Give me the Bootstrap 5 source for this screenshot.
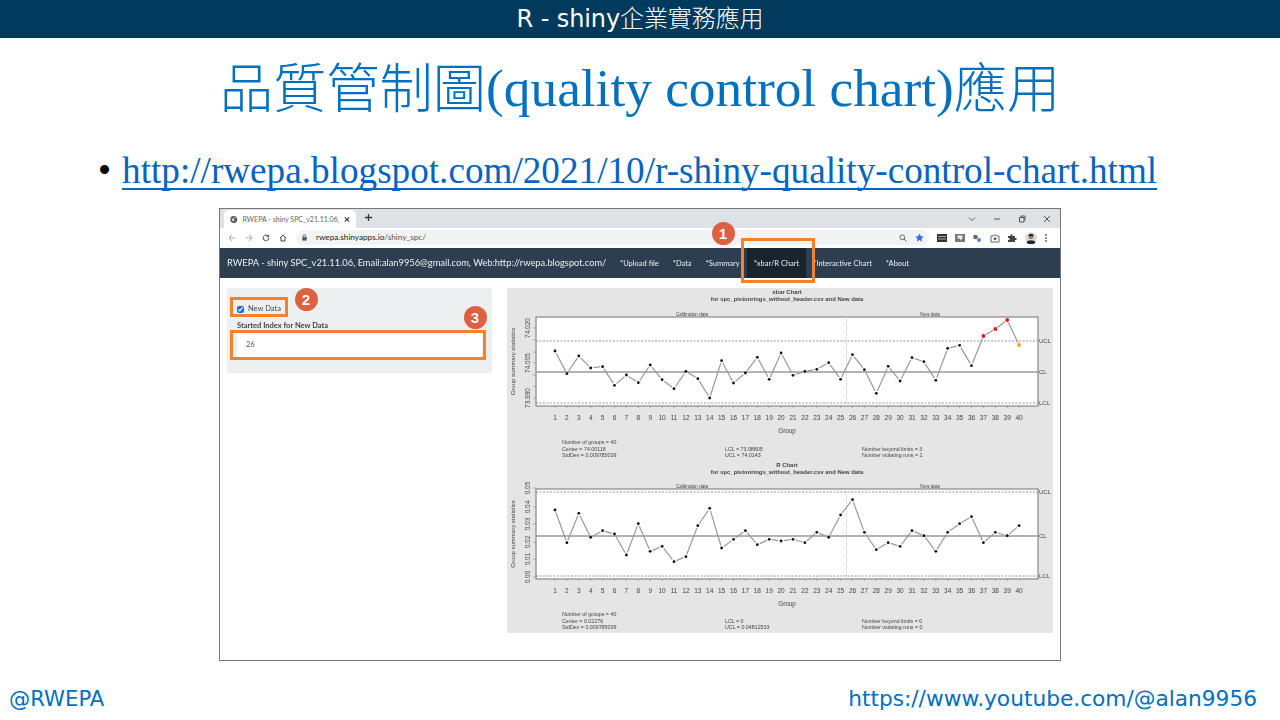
<!DOCTYPE html>
<html lang="zh-Hant">
<head>
  <meta charset="UTF-8">
  <title>R - shiny企業實務應用</title>
  <link rel="stylesheet" href="https://cdn.jsdelivr.net/npm/bootstrap@5.3.0/dist/css/bootstrap.min.css">
  <style>
    html, body { height: 100%; overflow: hidden; background: #fff; }
    .slide { width: 1280px; height: 720px; }
    .top-bar { height: 38px; background: #003a5c; color: #fff; font: 400 24px/38px "DejaVu Sans", "Noto Sans CJK TC", sans-serif; letter-spacing: -.1px; }
    .top-cjk { font-weight: 300; }
    .slide-title { height: 101px; margin: 0; color: #0070c0; font: 300 53.3px/101px "Liberation Serif", "Noto Sans CJK TC", serif; }
    .title-cjk { vertical-align: -2px; }
    .bullet-line { height: 69px; padding-left: 98px; font: 37.2px/64px "Liberation Serif", serif; gap: 11px; color: #000; }
    .bullet-line a { color: #0563c1; text-decoration-skip-ink: none; text-decoration-thickness: 1.5px; text-underline-offset: 5px; }
    .shot-wrap { padding-left: 219px; }
    .shot { width: 842px; height: 453px; border: 1px solid #777; position: relative; font-family: "Lato", sans-serif; }
    .tab-strip { height: 19px; background: #dee1e6; padding-left: 4px; color: #666; font-size: 7px; }
    .tab-item { width: 132px; height: 18px; background: #fff; border-radius: 5px 5px 0 0; gap: 5px; padding: 0 6px 0 6px; margin-top: 1px; white-space: nowrap; }
    .tab-item span { flex: 1; }
    .tool-strip { height: 20px; background: #fff; padding: 0 8px 1px; color: #555; }
    .nav-icons { gap: 9px; }
    .url-box { width: 633px; height: 15px; background: #f1f3f4; border-radius: 8px; font-size: 8.2px; padding: 0 5px; margin-left: 9px; }
    .url-box b { font-weight: 400; color: #222; }
    .ext-icons { gap: 7.5px; margin-left: 8px; }
    .shiny-nav { height: 30px; background: #2c3e50; color: #ecf0f1; padding-left: 7px; font-size: 7.5px; }
    .shiny-brand { font-size: 9.3px; width: 386px; white-space: nowrap; }
    .shiny-link { height: 30px; padding: 0 7px; white-space: nowrap; line-height: 31px; }
    .shiny-link.on { background: #1a242f; }
    .shot-body { padding: 10px 8px 0 7px; gap: 15px; }
    .side-well { width: 265px; height: 85px; background: #ecf0f1; border-radius: 2px; padding: 15px 10px 0; font-size: 7.5px; color: #333; }
    .side-check { gap: 4px; height: 12px; margin-bottom: 6px; color: #444; }
    .side-check input { width: 7px; height: 7px; margin: 0; accent-color: #0b6ee0; }
    .side-label { font-weight: 700; color: #444; line-height: 10px; margin-bottom: 2px; }
    .side-input { height: 24px; background: #fff; padding-left: 9px; line-height: 24px; color: #555; width: 245px; }
    .chart-panel { width: 546px; height: 345px; background: #e5e5e5; }
    .chart-panel svg { display: block; }
    .chart-panel text { font-family: "Liberation Sans", sans-serif; }
    .mark-box { position: absolute; border: 3px solid #f5822a; }
    .mark-num { position: absolute; width: 23px; height: 23px; border-radius: 50%; background: #dc6141; color: #fff; font: 700 15px/23px "Liberation Sans", sans-serif; text-align: center; }
    .foot-line { position: absolute; left: 0; right: 0; top: 685px; padding: 0 23px 0 9px; color: #0070c0; font: 21.7px/28px "DejaVu Sans", sans-serif; }
    .foot-handle { font-size: 21.2px; }
    .soft { filter: blur(.45px); }
  </style>
</head>
<body>
  <div class="slide position-relative">
    <div class="top-bar text-center">R - shiny<span class="top-cjk">企業實務應用</span></div>
    <h1 class="slide-title text-center"><span class="title-cjk">品質管制圖</span>(quality control chart)<span class="title-cjk">應用</span></h1>
    <div class="bullet-line d-flex">
      <span>•</span>
      <a href="#">http://rwepa.blogspot.com/2021/10/r-shiny-quality-control-chart.html</a>
    </div>

    <div class="shot-wrap">
      <div class="shot">
        <div class="soft">
          <div class="tab-strip d-flex">
            <div class="tab-item d-flex align-items-center">
              <svg width="9" height="9" viewBox="0 0 10 10"><circle cx="5" cy="5" r="4.5" fill="#555"/><path d="M2 3l3 1 1 2-2 2-1-2zM6 1l2 2-2 1z" fill="#dee1e6"/></svg>
              <span>RWEPA - shiny SPC_v21.11.06,</span>
              <svg width="7" height="7" viewBox="0 0 8 8"><path d="M1 1l6 6M7 1l-6 6" stroke="#333" stroke-width="1.4"/></svg>
            </div>
            <svg class="ms-2 mt-1" width="9" height="9" viewBox="0 0 10 10"><path d="M5 1v8M1 5h8" stroke="#333" stroke-width="1.4"/></svg>
            <div class="d-flex align-items-center ms-auto" style="gap:17px;padding-right:9px">
              <svg width="8" height="8" viewBox="0 0 8 8"><path d="M1 2.500l3 3 3-3" fill="none" stroke="#666"/></svg>
              <svg width="8" height="8" viewBox="0 0 8 8"><path d="M1 4h6" stroke="#555"/></svg>
              <svg width="8" height="8" viewBox="0 0 8 8"><path d="M1.500 2.500h4.500v4.500h-4.500zM3 2.500v-1.500h4v4h-1" fill="none" stroke="#555"/></svg>
              <svg width="8" height="8" viewBox="0 0 8 8"><path d="M1 1l6 6M7 1l-6 6" stroke="#555"/></svg>
            </div>
          </div>
          <div class="tool-strip d-flex align-items-center">
            <div class="nav-icons d-flex align-items-center">
              <svg width="8" height="8" viewBox="0 0 8 8"><path d="M7 4H1M4 1L1 4l3 3" fill="none" stroke="#aaa"/></svg>
              <svg width="8" height="8" viewBox="0 0 8 8"><path d="M1 4h6M4 1l3 3-3 3" fill="none" stroke="#aaa"/></svg>
              <svg width="8" height="8" viewBox="0 0 8 8"><path d="M6.800 4a2.800 2.800 0 1 1-.8-2M6.800.8v2h-2" fill="none" stroke="#444"/></svg>
              <svg width="8" height="8" viewBox="0 0 8 8"><path d="M1 4l3-3 3 3M2 3.500V7h4V3.500" fill="none" stroke="#444"/></svg>
            </div>
            <div class="url-box d-flex align-items-center">
              <svg class="me-1" width="7" height="7" viewBox="0 0 8 8"><path d="M2.500 3.500V2.500a1.500 1.500 0 0 1 3 0v1" fill="none" stroke="#555"/><path d="M1.500 3.500h5V7.500h-5z" fill="#555"/></svg>
              <span class="ms-1"><b>rwepa.shinyapps.io</b>/shiny_spc/</span>
              <svg class="ms-auto" width="8" height="8" viewBox="0 0 8 8"><circle cx="3.300" cy="3.300" r="2.400" fill="none" stroke="#666"/><path d="M5 5l2.500 2.500" stroke="#666"/></svg>
              <svg class="ms-2" width="9" height="9" viewBox="0 0 10 10"><path d="M5 .5l1.400 3 3.300.4-2.400 2.200.6 3.300L5 7.800 2.100 9.400l.6-3.300L.3 3.900l3.300-.4z" fill="#2f6fe0"/></svg>
            </div>
            <div class="ext-icons d-flex align-items-center">
              <svg width="10" height="10" viewBox="0 0 10 10"><path d="M0 1h10v8H0z" fill="#333"/><path d="M1 3.500h8M1 6h8" stroke="#ccc" stroke-width=".8"/></svg>
              <svg width="10" height="10" viewBox="0 0 10 10"><path d="M0 1h10v8H0z" fill="#777"/><path d="M2.500 2.500h5v3l-2.500 2v-2h-2.500z" fill="#eee"/></svg>
              <svg width="10" height="10" viewBox="0 0 10 10"><circle cx="3.500" cy="4" r="2.300" fill="#666"/><circle cx="7" cy="7" r="2" fill="#4a86c8"/></svg>
              <svg width="10" height="10" viewBox="0 0 10 10"><path d="M1 3h2l1-1h2l1 1h2v6H1z" fill="none" stroke="#666"/><circle cx="5" cy="5.800" r="1.500" fill="#666"/></svg>
              <svg width="10" height="10" viewBox="0 0 10 10"><path d="M1 3h2.500V1.500h2V3H8v2h1.500v2H8v2H1V7h1.500V5H1z" fill="#444"/></svg>
              <svg width="12" height="12" viewBox="0 0 12 12"><circle cx="6" cy="6" r="6" fill="#d8dde2"/><circle cx="6" cy="4.500" r="2.500" fill="#a5754f"/><path d="M3.500 4c0-3 5-3 5 0z" fill="#222"/><path d="M1.500 10.500c1-3 8-3 9 0a6 6 0 0 1-9 0z" fill="#223"/></svg>
              <svg width="4" height="10" viewBox="0 0 4 10"><circle cx="2" cy="2" r=".9" fill="#555"/><circle cx="2" cy="5" r=".9" fill="#555"/><circle cx="2" cy="8" r=".9" fill="#555"/></svg>
            </div>
          </div>
          <div class="shiny-nav d-flex align-items-center">
            <div class="shiny-brand">RWEPA - shiny SPC_v21.11.06, Email:alan9956@gmail.com, Web:http://rwepa.blogspot.com/</div>
            <div class="shiny-link">*Upload file</div>
            <div class="shiny-link">*Data</div>
            <div class="shiny-link">*Summary</div>
            <div class="shiny-link on">*xbar/R Chart</div>
            <div class="shiny-link">*Interactive Chart</div>
            <div class="shiny-link">*About</div>
          </div>
          <div class="shot-body d-flex align-items-start">
            <div class="side-well">
              <div class="side-check d-flex align-items-center">
                <input type="checkbox" checked>
                <span>New Data</span>
              </div>
              <div class="side-label">Started Index for New Data</div>
              <div class="side-input">26</div>
            </div>
            <div class="chart-panel">
              <svg id="spc-charts" width="546" height="345"></svg>
            </div>
          </div>
        </div>

        <!-- annotations over the screenshot -->
        <div class="mark-box" style="left:521px;top:29px;width:74px;height:45px"></div>
        <div class="mark-box" style="left:10px;top:88px;width:58px;height:20px"></div>
        <div class="mark-box" style="left:10px;top:121px;width:256px;height:30px"></div>
        <div class="mark-num" style="left:491.500px;top:12.500px">1</div>
        <div class="mark-num" style="left:74.500px;top:78.500px">2</div>
        <div class="mark-num" style="left:243.500px;top:96.500px">3</div>
      </div>
    </div>

    <div class="foot-line d-flex justify-content-between">
      <span class="foot-handle">@RWEPA</span>
      <span>https://www.youtube.com/@alan9956</span>
    </div>
  </div>

  <script>
    // y values read off the picture, in px inside the chart panel
    const xbarPts = [198,266,213,249,245,301,270,293,240,284,311,259,281,339,227,294,264,217,283,204,271,259,253,233,283,209,254,325,244,288,218,230,286,190,181,242,153,132,105,180]
      .map(v => 285 + v / 3 - 288);
    const rPts = [150,248,160,232,212,222,285,191,274,259,305,290,197,145,264,238,212,254,238,243,238,248,217,232,165,119,217,269,248,259,212,227,274,217,191,170,248,217,227,197]
      .map(v => 460 + v / 3 - 288);

    const ptX = i => 48 + i * 11.9;

    function label(x, y, txt, size, opts = '') {
      return `<text x="${x}" y="${y}" font-size="${size}" fill="#444" ${opts}>${txt}</text>`;
    }

    function drawChart(c) {
      let out = '';
      out += label(280, c.titleY, c.title, 5.9, 'text-anchor="middle" font-weight="700" fill="#222"');
      out += label(280, c.titleY + 7, 'for spc_pistonrings_without_header.csv and New data', 5.9, 'text-anchor="middle" font-weight="700"');
      out += label(185, c.top - 1.5, 'Calibration data', 4.6, 'text-anchor="middle"');
      out += label(423, c.top - 1.5, 'New data', 4.6, 'text-anchor="middle"');
      out += `<rect x="29" y="${c.top}" width="502" height="${c.bottom - c.top}" fill="#fff" stroke="#888" stroke-width="1.2"/>`;
      out += `<line x1="339.500" x2="339.500" y1="${c.top}" y2="${c.bottom}" stroke="#ccc" stroke-dasharray="1 1"/>`;
      out += `<line x1="29" x2="531" y1="${c.ucl}" y2="${c.ucl}" stroke="#888" stroke-dasharray="2 1.500" stroke-width=".9"/>`;
      out += `<line x1="29" x2="531" y1="${c.lcl}" y2="${c.lcl}" stroke="#888" stroke-dasharray="2 1.500" stroke-width=".9"/>`;
      out += `<line x1="29" x2="531" y1="${c.cl}" y2="${c.cl}" stroke="#999" stroke-width="1.3"/>`;
      out += label(532, c.ucl + 2, 'UCL', 6, 'fill="#666"');
      out += label(532, c.cl + 2, 'CL', 6, 'fill="#666"');
      out += label(532, c.lcl + 2, 'LCL', 6, 'fill="#666"');

      // segments are cut short of each point, like type="b" in base R
      c.pts.forEach((y, i) => {
        if (i === 0) return;
        const x0 = ptX(i - 1), y0 = c.pts[i - 1], x1 = ptX(i), dx = x1 - x0, dy = y - y0;
        const len = Math.hypot(dx, dy), gap = 2.6;
        if (len <= gap * 2) return;
        out += `<line x1="${x0 + dx / len * gap}" y1="${y0 + dy / len * gap}" x2="${x1 - dx / len * gap}" y2="${y - dy / len * gap}" stroke="#999" stroke-width="1.2"/>`;
      });
      c.pts.forEach((y, i) => {
        const color = c.colors && c.colors[i] ? c.colors[i] : '#111';
        out += `<circle cx="${ptX(i)}" cy="${y}" r="${color === '#111' ? 1.400 : 1.900}" fill="${color}"/>`;
        out += `<line x1="${ptX(i)}" x2="${ptX(i)}" y1="${c.bottom}" y2="${c.bottom + 2}" stroke="#888" stroke-width=".6"/>`;
        out += label(ptX(i), c.bottom + 13.5, i + 1, 6.5, 'text-anchor="middle"');
      });
      out += label(280, c.bottom + 27, 'Group', 6.3, 'text-anchor="middle"');
      const midY = (c.top + c.bottom) / 2;
      out += label(8, midY, 'Group summary statistics', 6, `text-anchor="middle" transform="rotate(-90 8 ${midY})"`);
      c.ticks.forEach(t => {
        out += `<line x1="26" x2="29" y1="${t.y}" y2="${t.y}" stroke="#888" stroke-width=".6"/>`;
        if (t.txt) out += label(23, t.y, t.txt, 6.5, `text-anchor="middle" transform="rotate(-90 23 ${t.y})"`);
      });
      c.stats.forEach(s => { out += label(s[0], s[1], s[2], 5.3); });
      return out;
    }

    const xbarChart = {
      title: 'xbar Chart', titleY: 6, top: 29, bottom: 118, ucl: 53, cl: 84, lcl: 115, pts: xbarPts,
      colors: { 36: '#f01010', 37: '#f01010', 38: '#f01010', 39: '#f5a010' },
      ticks: [
        { y: 40, txt: '74.020' }, { y: 52 }, { y: 64 }, { y: 75, txt: '74.005' },
        { y: 87 }, { y: 98.500 }, { y: 110, txt: '73.990' }
      ],
      stats: [
        [55, 156, 'Number of groups = 40'], [55, 162.500, 'Center = 74.00118'], [55, 169, 'StdDev = 0.009785039'],
        [218, 162.500, 'LCL = 73.98805'], [218, 169, 'UCL = 74.0143'],
        [355, 162.500, 'Number beyond limits = 3'], [355, 169, 'Number violating runs = 1']
      ]
    };
    const rChart = {
      title: 'R Chart', titleY: 178.500, top: 201, bottom: 291, ucl: 204, cl: 248, lcl: 288, pts: rPts,
      ticks: [
        { y: 289, txt: '0.00' }, { y: 271, txt: '0.01' }, { y: 254, txt: '0.02' },
        { y: 236, txt: '0.03' }, { y: 219, txt: '0.04' }, { y: 200, txt: '0.05' }
      ],
      stats: [
        [55, 328, 'Number of groups = 40'], [55, 334.500, 'Center = 0.02276'], [55, 341, 'StdDev = 0.009785039'],
        [218, 334.500, 'LCL = 0'], [218, 341, 'UCL = 0.04812533'],
        [355, 334.500, 'Number beyond limits = 0'], [355, 341, 'Number violating runs = 0']
      ]
    };

    document.getElementById('spc-charts').innerHTML = drawChart(xbarChart) + drawChart(rChart);
  </script>
  <script src="https://cdn.jsdelivr.net/npm/bootstrap@5.3.0/dist/js/bootstrap.bundle.min.js"></script>
</body>
</html>
